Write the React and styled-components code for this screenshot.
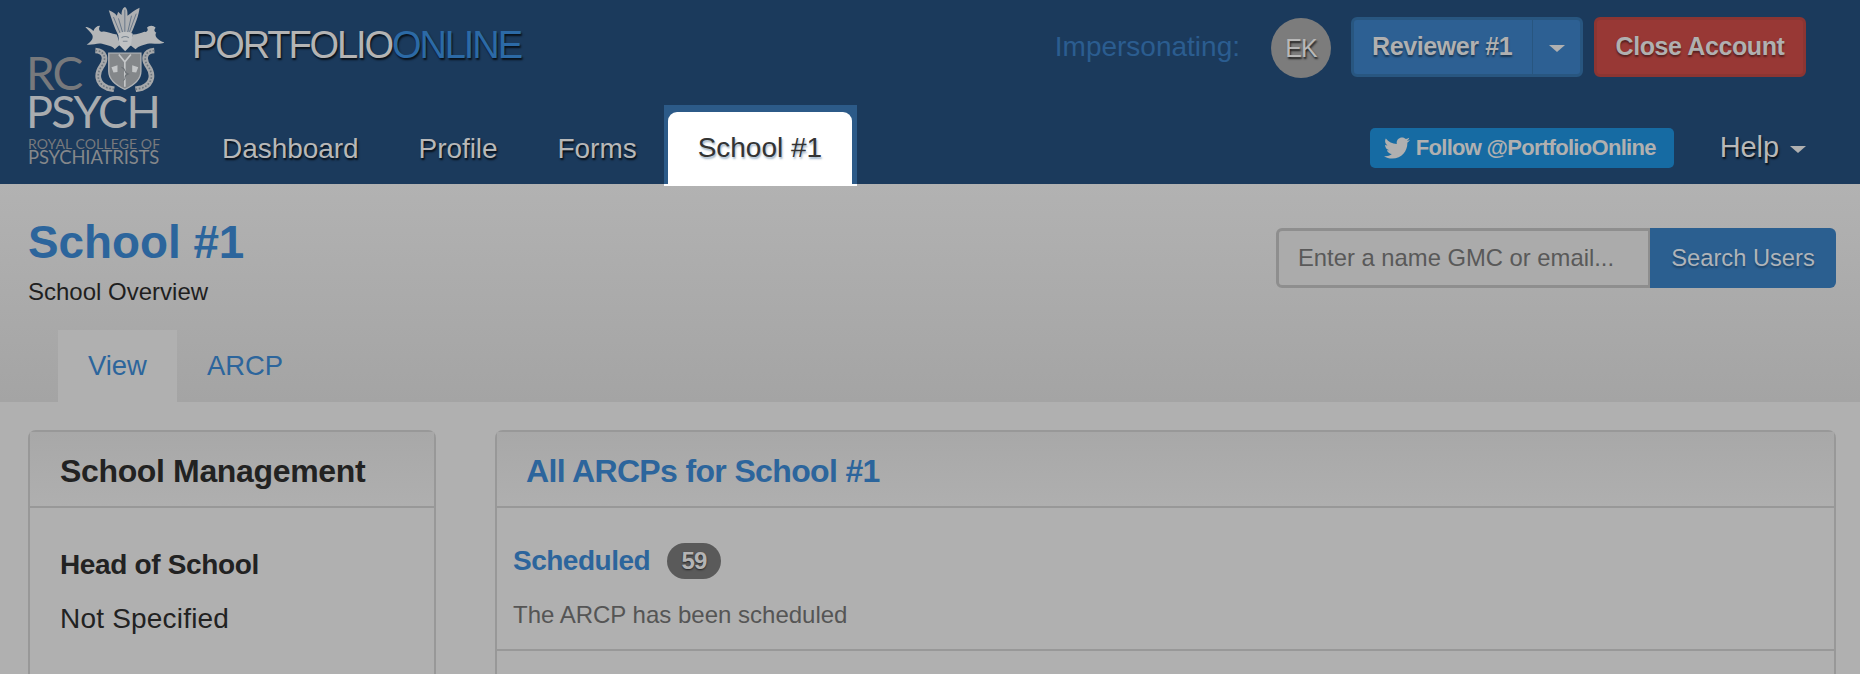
import React from 'react';
import styled, { createGlobalStyle } from 'styled-components';
import { FaTwitter } from 'react-icons/fa';

const GlobalStyle = createGlobalStyle`
    html, body {
        margin: 0;
        height: 674px;
        overflow: hidden;
        background: #b0b0b0;
        font-family: "Liberation Sans", Arial, sans-serif;
    }
`;

const Page = styled.div`
    height: 674px;
    overflow: hidden;
`;

/* Top navbar */
const Navbar = styled.header`
    display: flex;
    height: 184px;
    padding: 0 54px 0 28px;
    box-sizing: border-box;
    background: #1b3a5c;
`;

const Logo = styled.div`
    width: 130px;
    flex: none;
    margin-right: 34px;
    font-family: Lato, "Open Sans", sans-serif;
    color: #a9acaf;
`;

const LogoTop = styled.div`
    display: flex;
    height: 92px;
    justify-content: space-between;
    align-items: flex-end;
`;

const LogoRc = styled.span`
    font-size: 46px;
    line-height: 34px;
    letter-spacing: -2px;
    margin-left: -2px;
    color: #77797c;
    margin-bottom: 2px;
`;

const Crest = styled.svg`
    width: 79px;
    height: 87px;
    margin-right: -6px;
`;

const LogoPsych = styled.div`
    font-size: 45px;
    line-height: 36px;
    letter-spacing: -1.7px;
    margin-left: -2px;
    margin-top: 1px;
    white-space: nowrap;
`;

const LogoSmall = styled.div`
    margin-top: 9px;
    font-size: 14px;
    line-height: 11px;
    letter-spacing: 0.1px;
    white-space: nowrap;
    color: #77797c;
`;

const LogoSmallBig = styled.div`
    margin-top: 1px;
    font-size: 18.4px;
    line-height: 15px;
    letter-spacing: -0.1px;
    white-space: nowrap;
    color: #85888b;
`;

const NavMain = styled.div`
    flex: 1;
    display: flex;
    flex-direction: column;
`;

const TopRow = styled.div`
    display: flex;
    height: 105px;
    padding-top: 16px;
    box-sizing: border-box;
    align-items: flex-start;
`;

const Brand = styled.div`
    margin-top: 10px;
    font-size: 38px;
    line-height: 38px;
    letter-spacing: -2.1px;
    color: #b4b4b4;
    text-shadow: 1px 2px 2px rgba(0, 0, 0, 0.75);
    span {
        color: #2c6aa6;
    }
`;

const TopActions = styled.div`
    margin-left: auto;
    display: flex;
    align-items: center;
`;

const Impersonating = styled.span`
    font-size: 28px;
    color: #2b5d90;
    margin-right: 31px;
`;

const Avatar = styled.div`
    width: 60px;
    height: 60px;
    margin-top: 2px;
    margin-right: 20px;
    border-radius: 50%;
    background: #7c7c7c;
    display: flex;
    align-items: center;
    justify-content: center;
    font-size: 25px;
    letter-spacing: -1px;
    color: #b8b8b8;
    text-shadow: 1px 2px 2px rgba(0, 0, 0, 0.75);
`;

const Button = styled.div`
    width: ${p => p.$width}px;
    height: 60px;
    box-sizing: border-box;
    display: flex;
    align-items: center;
    justify-content: center;
    padding-bottom: 2px;
    border: 3px solid ${p => p.$border};
    border-radius: 6px;
    background: ${p => p.$bg};
    font-size: 25px;
    font-weight: 700;
    letter-spacing: -0.4px;
    color: #b0b0b0;
    text-shadow: 0 2px 2px rgba(0, 0, 0, 0.45);
`;

const SplitButton = styled(Button)`
    padding: 0;
    margin-right: 11px;
`;

const SplitLabel = styled.div`
    width: 179px;
    padding: 0 0 2px 18px;
    box-sizing: border-box;
    height: 100%;
    display: flex;
    align-items: center;
    border-right: 1px solid #285680;
`;

const SplitCaret = styled.div`
    flex: 1;
    display: flex;
    justify-content: center;
`;

const Caret = styled.i`
    display: block;
    width: 0;
    height: 0;
    margin-top: 3px;
    border-left: 8px solid transparent;
    border-right: 8px solid transparent;
    border-top: 7px solid #b0b0b0;
`;

const NavRow = styled.nav`
    display: flex;
    height: 79px;
    align-items: stretch;
`;

const NavLink = styled.a`
    display: flex;
    align-items: center;
    padding: 8px 30px 0;
    font-size: 28px;
    letter-spacing: -0.05px;
    color: #b8b8b8;
    text-shadow: 1px 2px 2px rgba(0, 0, 0, 0.8);
`;

const ActiveLink = styled.a`
    position: relative;
    z-index: 1;
    height: 81px;
    margin-left: -3px;
    padding: 7px 5px 0 4px;
    box-sizing: border-box;
    background: #2c5a88;
    border-bottom: 2px solid #fff;
`;

const ActiveLabel = styled.span`
    display: flex;
    align-items: center;
    height: 100%;
    padding: 0 30px;
    border-radius: 9px 9px 0 0;
    background: #fff;
    font-size: 28px;
    color: #333;
    text-shadow: 1px 2px 2px rgba(44, 90, 136, 0.45);
`;

const NavRight = styled.div`
    margin-left: auto;
    display: flex;
    align-items: center;
    padding-top: 6px;
`;

const TwitterButton = styled.div`
    display: flex;
    align-items: center;
    gap: 6px;
    height: 40px;
    width: 304px;
    padding-left: 14px;
    box-sizing: border-box;
    border-radius: 5px;
    background: #166ba3;
    font-size: 22px;
    font-weight: 700;
    letter-spacing: -0.7px;
    color: #b0b0b0;
    margin-right: 46px;
    svg {
        font-size: 26px;
        flex: none;
    }
`;

const Help = styled.div`
    display: flex;
    align-items: center;
    gap: 11px;
    font-size: 29px;
    letter-spacing: -0.1px;
    color: #b8b8b8;
    text-shadow: 1px 2px 2px rgba(0, 0, 0, 0.8);
`;

/* Page heading */
const Heading = styled.section`
    height: 218px;
    box-sizing: border-box;
    padding: 34px 24px 0 28px;
    background: linear-gradient(#b2b2b2, #a4a4a4);
    display: flex;
    flex-direction: column;
`;

const HeadingTop = styled.div`
    display: flex;
    justify-content: space-between;
    align-items: flex-start;
`;

const Title = styled.h1`
    margin: 0;
    font-size: 45.8px;
    line-height: 50px;
    font-weight: 700;
    color: #2c659c;
`;

const Subtitle = styled.div`
    margin-top: 10px;
    font-size: 24px;
    line-height: 28px;
    color: #1f1f1f;
`;

const SearchForm = styled.form`
    display: flex;
    margin-top: 10px;
`;

const SearchInput = styled.input`
    width: 374px;
    height: 60px;
    box-sizing: border-box;
    padding: 0 19px;
    border: 3px solid #8e8e8e;
    border-right-width: 2px;
    border-radius: 6px 0 0 6px;
    background: #ababab;
    font-family: inherit;
    font-size: 23.8px;
    outline: none;
    &::placeholder {
        color: #595959;
        opacity: 1;
    }
`;

const SearchButton = styled.div`
    width: 186px;
    height: 60px;
    display: flex;
    align-items: center;
    justify-content: center;
    border-radius: 0 6px 6px 0;
    background: #2b5f90;
    font-size: 23.7px;
    color: #afb4b9;
    text-shadow: 0 2px 2px rgba(0, 0, 0, 0.3);
`;

const Tabs = styled.div`
    margin-top: auto;
    display: flex;
    padding-left: 30px;
    height: 72px;
`;

const Tab = styled.a`
    display: flex;
    align-items: center;
    padding: 0 30px;
    font-size: 27.4px;
    color: #2c659c;
    background: ${p => (p.$active ? '#b0b0b0' : 'transparent')};
`;

/* Main content */
const Content = styled.main`
    display: grid;
    grid-template-columns: 408px 1fr;
    gap: 59px;
    padding: 28px 24px 0 28px;
`;

const Panel = styled.div`
    height: 400px;
    box-sizing: border-box;
    border: 2px solid #989898;
    border-bottom: 0;
    border-radius: 8px 8px 0 0;
`;

const PanelHeader = styled.div`
    height: 76px;
    box-sizing: border-box;
    display: flex;
    align-items: center;
    padding: 4px 0 0 ${p => p.$inset}px;
    border-bottom: 2px solid #989898;
    background: linear-gradient(#a8a8a8, #afafaf);
    font-size: 32px;
    font-weight: 700;
    letter-spacing: ${p => p.$spacing}px;
    color: ${p => p.$color};
`;

const SideBody = styled.div`
    padding: 30px 30px 0;
    font-size: 28px;
    line-height: 54px;
    color: #222;
`;

const SideLabel = styled.div`
    font-weight: 700;
    letter-spacing: -0.35px;
`;

const SideValue = styled.div`
    letter-spacing: 0.2px;
`;

const StatusRow = styled.div`
    padding: 35px 16px 0;
    height: 143px;
    box-sizing: border-box;
    border-bottom: 2px solid #989898;
`;

const StatusTitle = styled.div`
    display: flex;
    align-items: center;
    gap: 17px;
    height: 36px;
    font-size: 28px;
    font-weight: 700;
    letter-spacing: -0.5px;
    color: #2c659c;
`;

const Badge = styled.span`
    width: 54px;
    height: 36px;
    border-radius: 18px;
    background: #5a5a5a;
    display: flex;
    align-items: center;
    justify-content: center;
    font-size: 24px;
    font-weight: 700;
    letter-spacing: -0.8px;
    color: #b4b4b4;
    text-shadow: 0 1px 2px rgba(0, 0, 0, 0.6);
`;

const StatusText = styled.div`
    margin-top: 22px;
    font-size: 24px;
    line-height: 28px;
    color: #555;
`;

const CrestMark = () => (
    <Crest viewBox="225 10 236 260" aria-hidden="true">
        {/* plume */}
        <path d="M324 100 C312 76 304 50 296 26 C306 30 314 34 320 42 L324 30 L334 40 C334 30 336 20 344 16 C352 20 352 32 352 42 C362 34 374 24 388 18 C386 40 376 66 360 102 Z" fill="#aeb0b2" />
        <path d="M310 46 L330 94 M325 50 L338 94 M344 24 L344 94 M364 42 L352 94 M378 36 L358 90" stroke="#5b6d82" strokeWidth="2.5" fill="none" />
        {/* mantling */}
        <path d="M226 76 C238 76 246 84 250 88 C254 78 260 72 270 72 C264 82 268 90 276 90 C288 86 300 96 320 98 L330 128 L314 142 C306 132 290 130 276 126 C262 122 244 132 230 128 C244 120 252 108 246 98 C240 90 234 84 226 76 Z" fill="#b4b6b8" />
        <path d="M462 122 C446 130 428 122 412 126 C398 130 386 132 376 142 L358 128 L368 98 C382 98 392 94 402 90 C410 92 416 86 410 78 C416 70 430 70 436 78 C430 84 432 90 438 92 C430 104 444 116 462 122 Z" fill="#b4b6b8" />
        <path d="M324 96 C334 88 356 88 368 96 L362 130 L345 148 L328 130 Z" fill="#c0c2c4" />
        <path d="M334 108 C340 104 350 104 356 108 M338 118 H352" stroke="#7c8792" strokeWidth="3" fill="none" />
        {/* dolphins */}
        <path d="M256 146 C286 148 290 172 274 194 C260 214 258 244 292 258 L312 262" stroke="#a6a8aa" strokeWidth="17" fill="none" />
        <path d="M256 146 C286 148 290 172 274 194 C260 214 258 244 292 258 L312 262" stroke="#6f7880" strokeWidth="5" strokeDasharray="5 5" fill="none" />
        <path d="M432 146 C402 148 398 172 414 194 C428 214 430 244 396 258 L376 262" stroke="#a6a8aa" strokeWidth="17" fill="none" />
        <path d="M432 146 C402 148 398 172 414 194 C428 214 430 244 396 258 L376 262" stroke="#6f7880" strokeWidth="5" strokeDasharray="5 5" fill="none" />
        {/* shield */}
        <path d="M296 154 H392 V208 C392 236 366 252 344 262 C322 252 296 236 296 208 Z" fill="#84878a" stroke="#b0b2b4" strokeWidth="4" />
        <path d="M326 158 L344 180 L362 158 M344 176 V254" stroke="#c4c6c8" strokeWidth="5" fill="none" />
        <path d="M304 196 L322 190 L322 210 L310 212 Z M384 196 L366 190 L366 210 L378 212 Z" fill="#c4c6c8" />
        <path d="M334 196 C352 202 336 210 354 216 C336 222 352 228 340 236" stroke="#6b7075" strokeWidth="3" fill="none" />
    </Crest>
);

export default function App() {
    return (
        <Page>
            <GlobalStyle />
            <Navbar>
                <Logo>
                    <LogoTop>
                        <LogoRc>RC</LogoRc>
                        <CrestMark />
                    </LogoTop>
                    <LogoPsych>PSYCH</LogoPsych>
                    <LogoSmall>ROYAL COLLEGE OF</LogoSmall>
                    <LogoSmallBig>PSYCHIATRISTS</LogoSmallBig>
                </Logo>
                <NavMain>
                    <TopRow>
                        <Brand>PORTFOLIO<span>ONLINE</span></Brand>
                        <TopActions>
                            <Impersonating>Impersonating:</Impersonating>
                            <Avatar>EK</Avatar>
                            <SplitButton $width={232} $bg="#2d6093" $border="#285680">
                                <SplitLabel>Reviewer #1</SplitLabel>
                                <SplitCaret><Caret /></SplitCaret>
                            </SplitButton>
                            <Button $width={212} $bg="#983835" $border="#8c3532">Close Account</Button>
                        </TopActions>
                    </TopRow>
                    <NavRow>
                        <NavLink>Dashboard</NavLink>
                        <NavLink>Profile</NavLink>
                        <NavLink>Forms</NavLink>
                        <ActiveLink><ActiveLabel>School #1</ActiveLabel></ActiveLink>
                        <NavRight>
                            <TwitterButton><FaTwitter />Follow @PortfolioOnline</TwitterButton>
                            <Help>Help <Caret /></Help>
                        </NavRight>
                    </NavRow>
                </NavMain>
            </Navbar>

            <Heading>
                <HeadingTop>
                    <div>
                        <Title>School #1</Title>
                        <Subtitle>School Overview</Subtitle>
                    </div>
                    <SearchForm>
                        <SearchInput placeholder="Enter a name GMC or email..." />
                        <SearchButton>Search Users</SearchButton>
                    </SearchForm>
                </HeadingTop>
                <Tabs>
                    <Tab $active>View</Tab>
                    <Tab>ARCP</Tab>
                </Tabs>
            </Heading>

            <Content>
                <Panel>
                    <PanelHeader $inset={30} $spacing={-0.35} $color="#222">School Management</PanelHeader>
                    <SideBody>
                        <SideLabel>Head of School</SideLabel>
                        <SideValue>Not Specified</SideValue>
                    </SideBody>
                </Panel>
                <Panel>
                    <PanelHeader $inset={29} $spacing={-0.65} $color="#2c659c">All ARCPs for School #1</PanelHeader>
                    <StatusRow>
                        <StatusTitle>Scheduled <Badge>59</Badge></StatusTitle>
                        <StatusText>The ARCP has been scheduled</StatusText>
                    </StatusRow>
                </Panel>
            </Content>
        </Page>
    );
}
